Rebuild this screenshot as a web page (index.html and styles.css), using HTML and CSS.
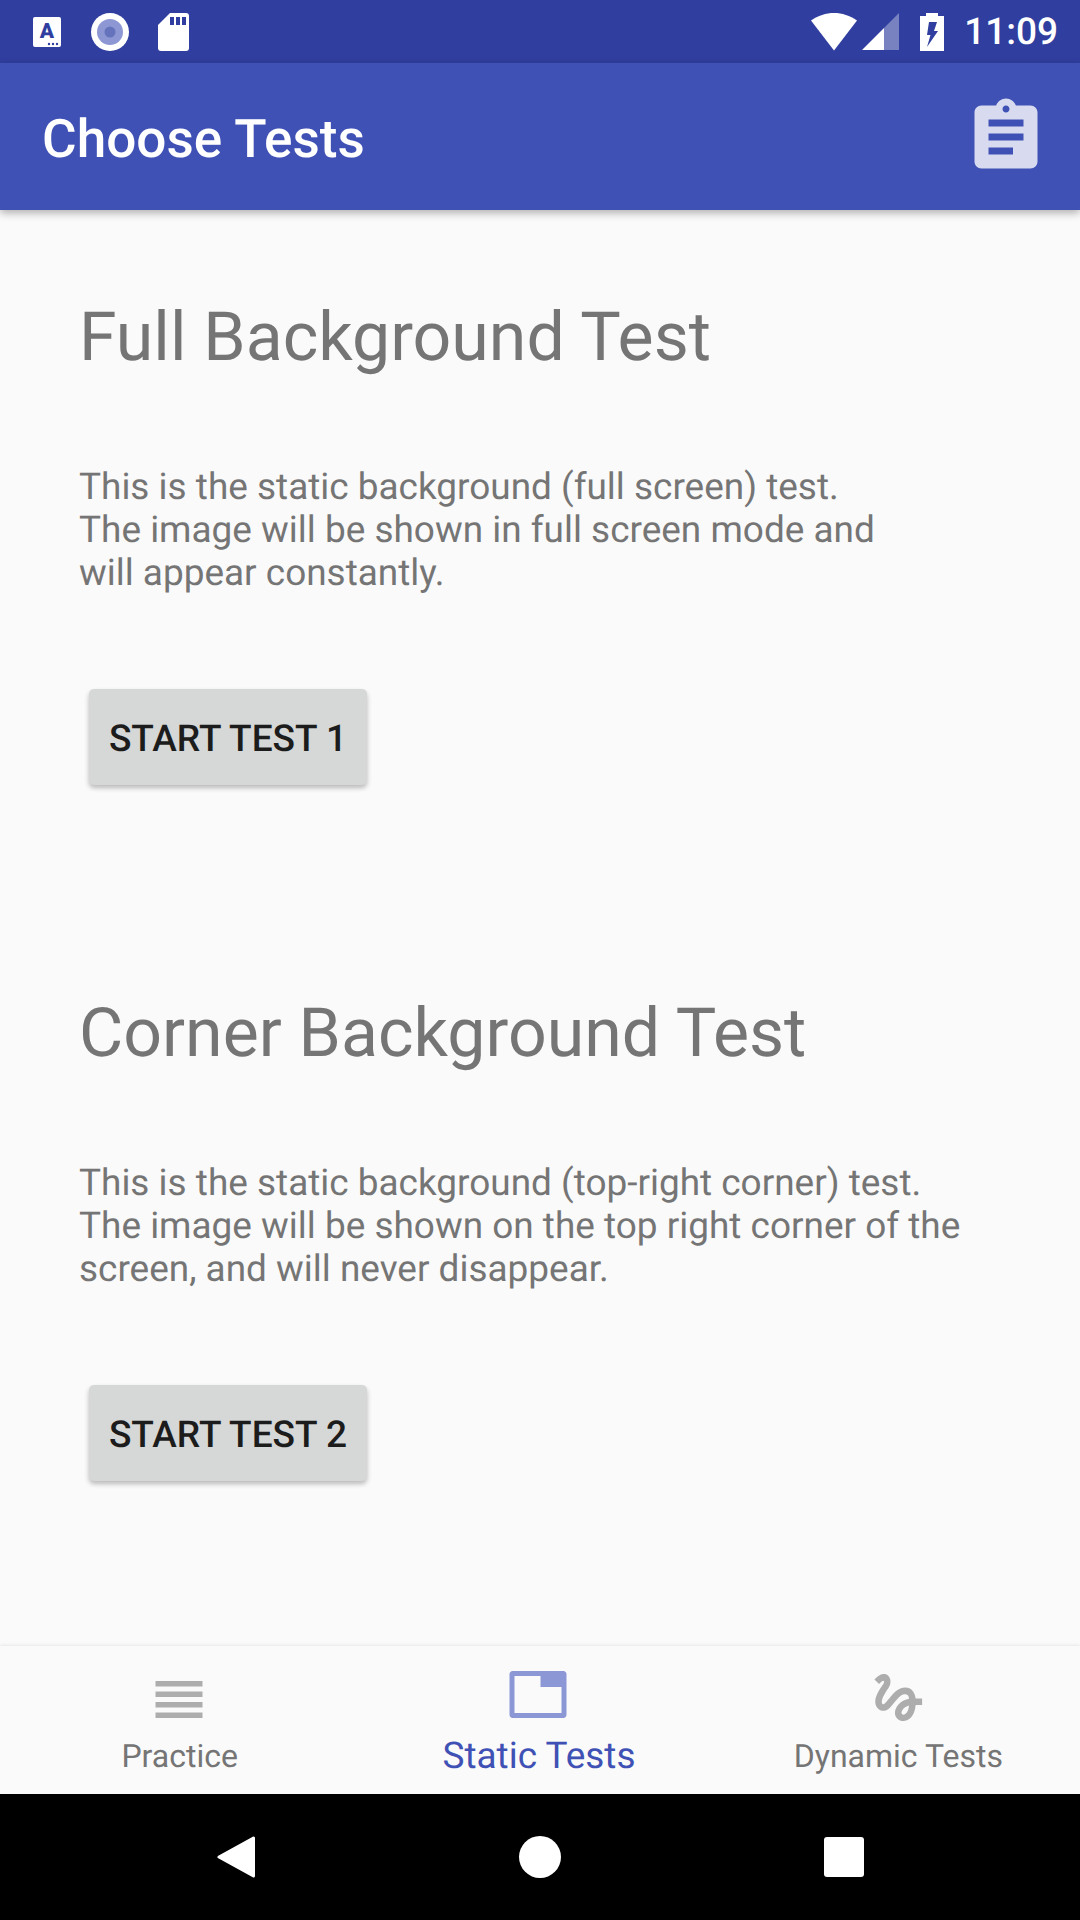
FILE: index.html
```html
<!doctype html>
<html>

<head>
	<meta http-equiv="Content-Type" content="text/html; charset=utf-8" />
	<title>Choose Tests</title>
	<link rel="stylesheet" href="styles.css">
</head>

<body>
	<div class="screen">
		<div class="status">
			<div class="status-left">
				<svg class="ic-a" viewBox="0 0 28 30">
					<rect width="28" height="30" rx="2" fill="#fff" />
					<text x="14" y="21" text-anchor="middle" class="ic-a-letter">A</text>
					<circle cx="16" cy="27" r="1.2" fill="#303f9f" />
					<circle cx="20" cy="27" r="1.2" fill="#303f9f" />
					<circle cx="24" cy="27" r="1.2" fill="#303f9f" />
				</svg>
				<svg class="ic-rec" viewBox="0 0 38 38">
					<circle cx="19" cy="19" r="19" fill="#fff" />
					<circle cx="19" cy="19" r="13" fill="#8c97d3" />
					<circle cx="19" cy="19" r="5.5" fill="#6573bd" />
				</svg>
				<svg class="ic-sd" viewBox="0 0 31 38">
					<path fill="#fff" d="M12 0H28C30 0 31 1 31 3V35C31 37 30 38 28 38H3C1 38 0 37 0 35V12Z" />
					<path fill="#303f9f" d="M12 4h4v8h-4zM18 4h4v8h-4zM24 4h4v8h-4z" />
				</svg>
			</div>
			<div class="status-right">
				<svg class="ic-wifi" viewBox="0 0 46 38">
					<path fill="#fff" d="M23 37.500L0 7.500C14 -2.500 32 -2.500 46 7.500Z" />
				</svg>
				<svg class="ic-signal" viewBox="0 0 37 37">
					<path fill="#fff" d="M0 37L22 15V37Z" />
					<path fill="#fff" opacity="0.35" d="M22 15L37 0V37H22Z" />
				</svg>
				<svg class="ic-batt" viewBox="0 0 24 38">
					<path fill="#fff" d="M6 0H18V3H24V38H0V3H6Z" />
					<path fill="#303f9f" d="M9 9H17L14 18H18L7 34L10.500 22H7Z" />
				</svg>
				<span class="clock">11:09</span>
			</div>
		</div>

		<div class="appbar">
			<div class="appbar-title">Choose Tests</div>
			<svg class="ic-clip" viewBox="0 0 24 24">
				<path d="M19 3h-4.180C14.400 1.840 13.300 1 12 1c-1.300 0-2.400.84-2.820 2H5c-1.100 0-2 .9-2 2v14c0 1.100.9 2 2 2h14c1.100 0 2-.9 2-2V5c0-1.100-.9-2-2-2zm-7 0c.55 0 1 .45 1 1s-.45 1-1 1-1-.45-1-1 .45-1 1-1zm2 14H7v-2h7v2zm3-4H7v-2h10v2zm0-4H7V7h10v2z" />
			</svg>
		</div>

		<div class="content">
			<div class="test">
				<h2 class="test-title">Full Background Test</h2>
				<p class="test-text">This is the static background (full screen) test.<br>The image will be shown in full screen mode and<br>will appear constantly.</p>
				<div class="btn">START TEST 1</div>
			</div>
			<div class="test">
				<h2 class="test-title">Corner Background Test</h2>
				<p class="test-text">This is the static background (top-right corner) test.<br>The image will be shown on the top right corner of the<br>screen, and will never disappear.</p>
				<div class="btn">START TEST 2</div>
			</div>
		</div>

		<div class="tabs">
			<div class="tab">
				<svg class="tab-icon" viewBox="0 0 63 63">
					<path fill="#adadad" d="M7.500 15h47v5.500h-47zM7.500 25.500h47V31h-47zM7.500 36h47v5.500h-47zM7.500 46.500h47V52h-47z" />
				</svg>
				<span class="tab-label">Practice</span>
			</div>
			<div class="tab tab-active">
				<svg class="tab-icon" viewBox="0 0 63 63">
					<path fill="#8c97d5" fill-rule="evenodd" d="M5.500 5H56.500C58 5 59.500 6.500 59.500 8V49C59.500 50.500 58 52 56.500 52H5.500C4 52 2.500 50.500 2.500 49V8C2.500 6.500 4 5 5.500 5ZM7.500 10V47H54.500V21H33.500V10Z" />
				</svg>
				<span class="tab-label">Static Tests</span>
			</div>
			<div class="tab">
				<svg class="tab-icon" viewBox="0 0 24 24">
					<path fill="#adadad" d="M4.590 6.890c.7-.71 1.400-1.350 1.710-1.220.5.2 0 1.030-.3 1.520-.25.42-2.860 3.890-2.860 6.310 0 1.280.48 2.340 1.340 2.980.75.56 1.740.73 2.640.46 1.070-.31 1.950-1.400 3.060-2.770 1.210-1.490 2.830-3.440 4.080-3.440 1.630 0 1.650 1.010 1.760 1.790-3.780.64-5.380 3.670-5.380 5.370 0 1.700 1.440 3.090 3.210 3.090 1.630 0 4.290-1.330 4.690-6.100H21v-2.500h-2.470c-.15-1.650-1.090-4.200-4.030-4.200-2.250 0-4.180 1.910-4.940 2.840-.58.73-2.060 2.480-2.290 2.720-.25.3-.68.84-1.110.84-.45 0-.72-.83-.36-1.920.35-1.090 1.400-2.860 1.850-3.520.78-1.140 1.300-1.920 1.300-3.280C8.950 3.690 7.310 3 6.440 3 5.120 3 3.970 4 3.720 4.250c-.36.36-.66.66-.88.93l1.750 1.710zm9.290 11.660c-.31 0-.74-.26-.74-.72 0-.6.73-2.200 2.870-2.760-.3 2.690-1.430 3.480-2.130 3.480z" />
				</svg>
				<span class="tab-label">Dynamic Tests</span>
			</div>
		</div>

		<div class="navbar">
			<svg class="nav-back" viewBox="0 0 38 42">
				<path fill="#fff" stroke="#fff" stroke-width="3" stroke-linejoin="round" d="M2 21L36.500 2V40Z" />
			</svg>
			<div class="nav-home"></div>
			<div class="nav-recent"></div>
		</div>
	</div>
</body>

</html>
```

FILE: styles.css
```css
html,
body,
h2,
p {
	margin: 0;
	padding: 0;
}

body {
	font-family: Roboto, "Liberation Sans", sans-serif;
	text-rendering: geometricPrecision;
	background: #fafafa;
}

.screen {
	width: 1080px;
	height: 1920px;
	display: flex;
	flex-direction: column;
	overflow: hidden;
}

/* status bar */
.status {
	height: 63px;
	flex: none;
	background: #303f9f;
	display: flex;
	justify-content: space-between;
	align-items: center;
	padding: 0 22px 0 33px;
}

.status-left,
.status-right {
	display: flex;
	align-items: center;
}

.ic-a {
	width: 28px;
	height: 30px;
}

.ic-a-letter {
	font-family: Roboto, sans-serif;
	font-weight: 900;
	font-size: 21px;
	fill: #303f9f;
}

.ic-rec {
	width: 38px;
	height: 38px;
	margin-left: 30px;
}

.ic-sd {
	width: 31px;
	height: 38px;
	margin-left: 29px;
}

.ic-wifi {
	width: 46px;
	height: 38px;
}

.ic-signal {
	width: 37px;
	height: 37px;
	margin-left: 5px;
}

.ic-batt {
	width: 24px;
	height: 38px;
	margin-left: 21px;
}

.clock {
	color: #fff;
	font-size: 37px;
	font-weight: 500;
	margin-left: 20px;
	padding-top: 2px;
}

/* app bar */
.appbar {
	height: 147px;
	flex: none;
	background: #3f51b5;
	display: flex;
	justify-content: space-between;
	align-items: center;
	padding: 0 32px 0 42px;
	box-shadow: 0 3px 8px rgba(0, 0, 0, 0.3);
	position: relative;
}

.appbar-title {
	color: #fff;
	font-size: 53.100px;
	font-weight: 500;
	padding-top: 4px;
}

.ic-clip {
	width: 84px;
	height: 84px;
	fill: #d8dbf0;
}

/* tests */
.content {
	flex: 1;
	min-height: 0;
	padding: 83px 0 0 79px;
}

.test {
	height: 696px;
}

.test-title {
	font-size: 68px;
	font-weight: 400;
	line-height: 88px;
	color: #757575;
}

.test-text {
	margin-top: 85px;
	font-size: 36.950px;
	line-height: 43px;
	color: #757575;
}

.btn {
	margin: 94px 0 0 10px;
	width: 278px;
	height: 96px;
	padding-top: 4px;
	box-sizing: border-box;
	background: #d6d7d7;
	border-radius: 5px;
	box-shadow: 0 3px 5px rgba(0, 0, 0, 0.26);
	color: #1c1c1c;
	font-size: 37.100px;
	font-weight: 500;
	display: flex;
	align-items: center;
	justify-content: center;
}

/* bottom tabs */
.tabs {
	height: 148px;
	flex: none;
	background: #fafafa;
	display: flex;
	padding-right: 2px;
	box-shadow: 0 -1px 3px rgba(0, 0, 0, 0.08);
	position: relative;
}

.tab {
	flex: 1;
	display: flex;
	flex-direction: column;
	align-items: center;
	padding-top: 20px;
}

.tab-icon {
	width: 63px;
	height: 63px;
	flex: none;
}

.tab-label {
	margin-top: 9px;
	font-size: 32px;
	line-height: 37px;
	color: #757575;
}

.tab-active .tab-label {
	margin-top: 9px;
	font-size: 36.950px;
	color: #3f51b5;
}

/* nav bar */
.navbar {
	height: 126px;
	flex: none;
	background: #000;
	display: flex;
	align-items: center;
	justify-content: space-between;
	padding: 0 216px 0 217px;
}

.nav-back {
	width: 38px;
	height: 42px;
}

.nav-home {
	width: 42px;
	height: 42px;
	border-radius: 50%;
	background: #fff;
}

.nav-recent {
	width: 40px;
	height: 40px;
	border-radius: 3px;
	background: #fff;
}
```
